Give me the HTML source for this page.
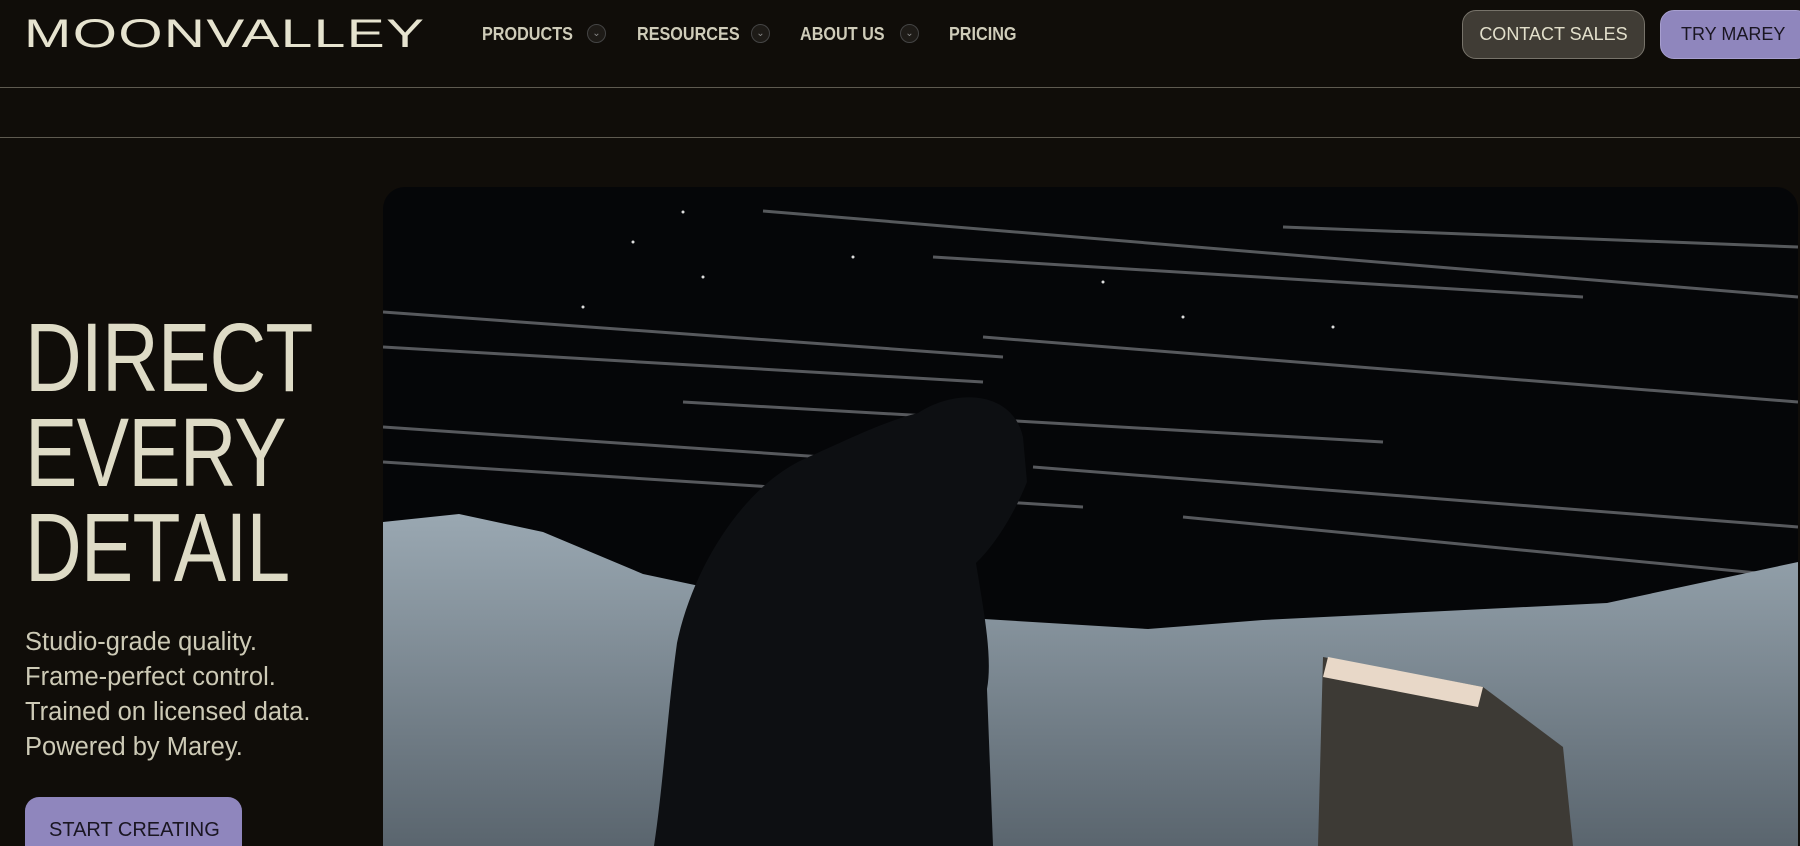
<!DOCTYPE html>
<html style="overflow:hidden"><head><meta charset="utf-8"><style>
*{margin:0;padding:0;box-sizing:border-box}
html,body{width:1800px;height:846px;overflow:hidden}
body{background:#100d09;font-family:"Liberation Sans",sans-serif;color:#dedbc6;position:relative}
.logo{position:absolute;left:24px;top:12px;font-size:40px;letter-spacing:1px;color:#e6e3cf;transform:scaleX(1.42);transform-origin:left top;font-weight:400}
.nav{position:absolute;top:24px;font-size:18px;font-weight:700;color:#cfccb9;transform:scaleX(.9);transform-origin:left top}
.chev{position:absolute;top:24px;width:19px;height:19px;border-radius:50%;border:1px solid #444;background:#1e1b17;color:#888;font-size:10px;text-align:center;line-height:17px}
.line{position:absolute;left:0;width:1800px;height:1px;background:#5e5a50}
.btn{position:absolute;border-radius:14px;font-size:18px;text-align:center}
h1{position:absolute;left:25px;top:310px;font-size:97px;line-height:95px;font-weight:400;color:#dedbc6;transform:scaleX(.81);transform-origin:left top;letter-spacing:-1px}
.p{position:absolute;left:25px;top:625px;font-size:25.5px;line-height:35px;color:#cdcab6}
</style></head><body>
<div class="logo">MOONVALLEY</div>
<div class="nav" style="left:482px">PRODUCTS</div><div class="chev" style="left:587px">⌄</div>
<div class="nav" style="left:637px">RESOURCES</div><div class="chev" style="left:751px">⌄</div>
<div class="nav" style="left:800px">ABOUT US</div><div class="chev" style="left:900px">⌄</div>
<div class="nav" style="left:949px">PRICING</div>
<div class="btn" style="left:1462px;top:10px;width:183px;height:49px;background:#403c35;border:1px solid #77736a;color:#e2dfcb;line-height:47px">CONTACT SALES</div>
<div class="btn" style="left:1660px;top:10px;width:150px;height:49px;background:#8f86bd;border:1px solid #a79fcf;color:#1a1622;line-height:47px;text-align:left;padding-left:20px">TRY MAREY</div>
<div class="line" style="top:87px"></div>
<div class="line" style="top:137px"></div>
<h1>DIRECT<br>EVERY<br>DETAIL</h1>
<div class="p">Studio-grade quality.<br>Frame-perfect control.<br>Trained on licensed data.<br>Powered by Marey.</div>
<div class="btn" style="left:25px;top:797px;width:217px;height:70px;background:#8f86bd;color:#1a1622;font-size:20px;text-align:left;padding:22px 0 0 24px">START CREATING</div>
<svg style="position:absolute;left:383px;top:187px" width="1417" height="659" viewBox="0 0 1417 659">
<defs><clipPath id="c"><rect width="1415" height="700" rx="22"/></clipPath>
<linearGradient id="g" x1="0" y1="0" x2="0" y2="1"><stop offset="0" stop-color="#9aa8b2"/><stop offset="1" stop-color="#5a656e"/></linearGradient></defs>
<g clip-path="url(#c)">
<rect width="1415" height="659" fill="#050608"/>
<g stroke="#9a9ea3" stroke-width="3" opacity=".55">
<line x1="380" y1="24" x2="1415" y2="110"/><line x1="0" y1="125" x2="620" y2="170"/><line x1="0" y1="160" x2="600" y2="195"/>
<line x1="300" y1="215" x2="1000" y2="255"/><line x1="0" y1="240" x2="440" y2="270"/><line x1="600" y1="150" x2="1415" y2="215"/>
<line x1="0" y1="275" x2="700" y2="320"/><line x1="650" y1="280" x2="1415" y2="340"/><line x1="800" y1="330" x2="1415" y2="390"/>
<line x1="900" y1="40" x2="1415" y2="60"/><line x1="550" y1="70" x2="1200" y2="110"/>
</g>
<g fill="#ddd"><circle cx="300" cy="25" r="1.5"/><circle cx="250" cy="55" r="1.5"/><circle cx="320" cy="90" r="1.5"/><circle cx="470" cy="70" r="1.5"/><circle cx="720" cy="95" r="1.5"/><circle cx="800" cy="130" r="1.5"/><circle cx="200" cy="120" r="1.5"/><circle cx="950" cy="140" r="1.5"/></g>
<path d="M0 335 L76 327 L160 345 L260 387 L420 421 L765 442 L880 433 L1224 416 L1415 375 L1415 659 L0 659Z" fill="url(#g)"/>
<path d="M535 226 C575 200 630 205 640 250 L644 295 C630 330 610 360 593 376 C600 420 610 470 604 502 L610 659 L271 659 C280 600 285 520 294 456 C310 380 360 300 421 272 C470 250 500 235 535 226Z" fill="#0d0f12"/>
<path d="M940 470 L1100 500 L1180 560 L1190 659 L935 659 Z" fill="#3d3a35"/>
<path d="M945 470 L1100 500 L1095 520 L940 490Z" fill="#e8d8c8"/>
</g></svg>
</body></html>
